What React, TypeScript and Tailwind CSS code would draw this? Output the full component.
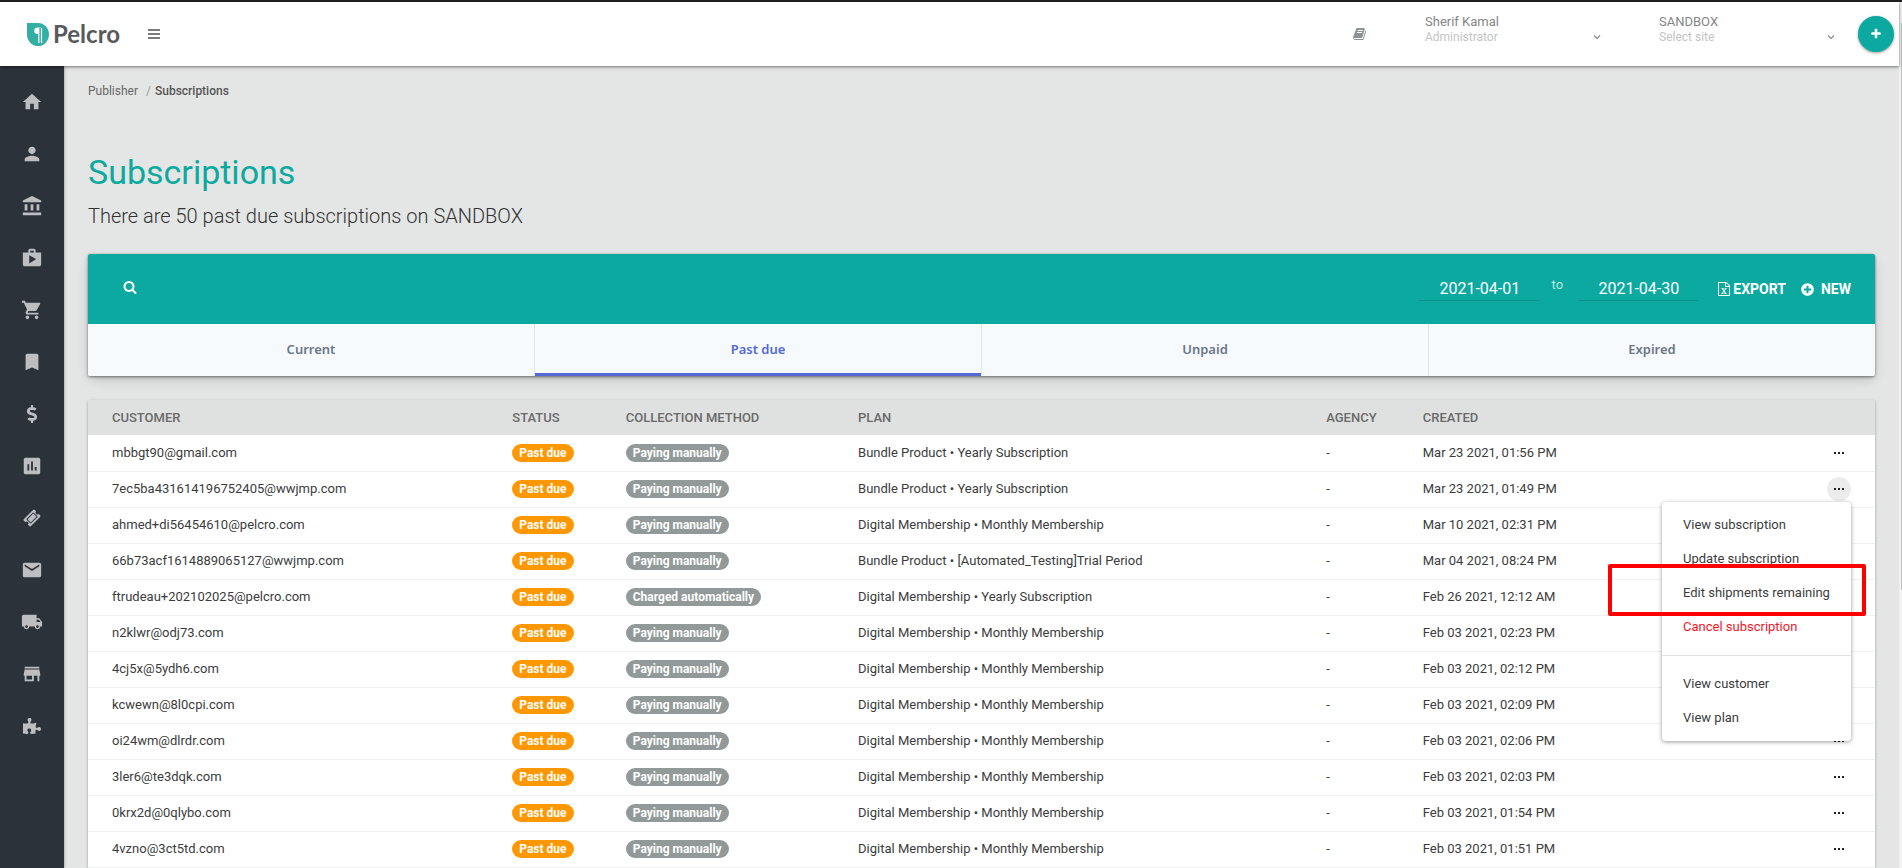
import { FaDollarSign, FaPlusCircle, FaPuzzlePiece } from "react-icons/fa";
import {
    MdHome,
    MdPerson,
    MdAccountBalance,
    MdShop,
    MdShoppingCart,
    MdBookmark,
    MdAssessment,
    MdEmail,
    MdLocalShipping,
    MdStore,
} from "react-icons/md";

type IconProps = { className?: string };

const BookIcon = ({ className }: IconProps) => (
    <svg viewBox="0 0 1792 1792" fill="currentColor" className={className}>
        <path d="M1639 478q40 57 18 129l-275 906q-19 64-76.500 107.500t-122.500 43.500h-923q-77 0-148.500-53.500t-99.500-131.500q-24-67-2-127 0-4 3-27t4-37q1-8-3-21.500t-3-19.500q2-11 8-21t16.500-23.500 16.500-23.500q23-38 45-91.500t30-91.500q3-10 .5-30t-.5-28q3-11 17-28t17-23q21-36 42-92t25-90q1-9-2.500-32t.5-28q4-13 22-30.500t22-22.500q19-26 42.500-84.500t27.500-96.500q1-8-3-25.500t-2-26.500q2-8 9-18t18-23 17-21q8-12 16.500-30.500t15-35 16-36 19.500-32 26.500-23.500 36-11.500 47.500 5.500l-1 3q38-9 51-9h761q74 0 114 56t18 130l-274 906q-36 119-71.500 153.500t-128.500 34.500h-869q-27 0-38 15-11 16-1 43 24 70 144 70h923q29 0 56-15.500t35-41.500l300-987q7-22 5-57 38 15 59 43zm-1064 2q-4 13 2 22.500t20 9.500h608q13 0 25.500-9.500t16.500-22.500l21-64q4-13-2-22.500t-20-9.500h-608q-13 0-25.500 9.500t-16.500 22.500zm-83 256q-4 13 2 22.500t20 9.500h608q13 0 25.500-9.500t16.500-22.500l21-64q4-13-2-22.500t-20-9.500h-608q-13 0-25.500 9.500t-16.500 22.500z" />
    </svg>
);

const SearchIcon = ({ className }: IconProps) => (
    <svg viewBox="0 0 1792 1792" fill="currentColor" className={className}>
        <path d="M1216 832q0-185-131.500-316.500t-316.500-131.500-316.500 131.500-131.500 316.500 131.500 316.500 316.500 131.500 316.500-131.500 131.500-316.500zm512 832q0 52-38 90t-90 38q-54 0-90-38l-343-342q-179 124-399 124-143 0-273.500-55.500t-225-150-150-225-55.500-273.500 55.500-273.500 150-225 225-150 273.500-55.500 273.500 55.500 225 150 150 225 55.500 273.500q0 220-124 399l343 343q37 37 37 90z" />
    </svg>
);

const PlusIcon = ({ className }: IconProps) => (
    <svg viewBox="0 0 1792 1792" fill="currentColor" className={className}>
        <path d="M1600 736v192q0 40-28 68t-68 28h-416v416q0 40-28 68t-68 28h-192q-40 0-68-28t-28-68v-416h-416q-40 0-68-28t-28-68v-192q0-40 28-68t68-28h416v-416q0-40 28-68t68-28h192q40 0 68 28t28 68v416h416q40 0 68 28t28 68z" />
    </svg>
);

const ExcelIcon = ({ className }: IconProps) => (
    <svg viewBox="0 0 1792 1792" fill="currentColor" className={className}>
        <path d="M1596 380q28 28 48 76t20 88v1152q0 40-28 68t-68 28h-1344q-40 0-68-28t-28-68v-1600q0-40 28-68t68-28h896q40 0 88 20t76 48zm-444-244v376h376q-10-29-22-41l-313-313q-12-12-41-22zm384 1528v-1024h-416q-40 0-68-28t-28-68v-416h-768v1536h1280zm-979-234v106h281v-106h-75l103-161q5-7 10-16.500t7.500-13.500 3.500-4h2q1 4 5 10 2 4 4.500 7.500t6 8 6.500 8.500l107 161h-76v106h291v-106h-68l-192-273 195-282h67v-107h-279v107h74l-103 159q-4 7-10 16.500t-9 13.500l-2 3h-2q-1-4-5-10-6-11-17-23l-106-159h76v-107h-290v107h68l189 272-194 283h-68z" />
    </svg>
);

const TicketIcon = ({ className }: IconProps) => (
    <svg viewBox="0 0 1792 1792" fill="currentColor" className={className}>
        <path d="M1024 452l316 316-572 572-316-316zm-211 979l618-618q19-19 19-45t-19-45l-362-362q-18-18-45-18t-45 18l-618 618q-19 19-19 45t19 45l362 362q18 18 45 18t45-18zm889-637l-907 908q-37 37-90.500 37t-90.500-37l-126-126q56-56 56-136t-56-136-136-56-136 56l-125-126q-37-37-37-90.500t37-90.500l907-906q37-37 90.500-37t90.500 37l125 125q-56 56-56 136t56 136 136 56 136-56l126 125q37 37 37 90.500t-37 90.500z" />
    </svg>
);

const ChevronIcon = ({ className }: IconProps) => (
    <svg viewBox="0 0 8 8" fill="none" stroke="currentColor" strokeWidth="1.2" className={className}>
        <path d="M1 2.500l3 3 3-3" />
    </svg>
);

const LogoMark = ({ className }: IconProps) => (
    <svg viewBox="0 0 22 23" className={className}>
        <path d="M0 0h11a11 11.500 0 1 1-11 11.500z" fill="#33aea3" />
        <path d="M14.500 5v15M11.800 5v15" stroke="#fff" strokeWidth="1.200" />
        <path d="M15.500 4.500h-5a3 3 0 0 0 0 6.500h1.300v-6z" fill="#fff" />
    </svg>
);

const navItems = [
    { label: "Home", icon: MdHome, size: "size-[22px]" },
    { label: "Customers", icon: MdPerson, size: "size-[22px]" },
    { label: "Accounts", icon: MdAccountBalance, size: "size-[22px]" },
    { label: "Products", icon: MdShop, size: "size-[22px]" },
    { label: "Orders", icon: MdShoppingCart, size: "size-[22px]" },
    { label: "Bookmarks", icon: MdBookmark, size: "size-[22px]" },
    { label: "Payments", icon: FaDollarSign, size: "size-[18px]" },
    { label: "Reports", icon: MdAssessment, size: "size-[22px]" },
    { label: "Coupons", icon: TicketIcon, size: "size-[18px]" },
    { label: "Email", icon: MdEmail, size: "size-[22px]" },
    { label: "Shipping", icon: MdLocalShipping, size: "size-[22px]" },
    { label: "Store", icon: MdStore, size: "size-[22px]" },
    { label: "Integrations", icon: FaPuzzlePiece, size: "size-[18px]" },
];

const tabs = ["Current", "Past due", "Unpaid", "Expired"];

const MANUAL = "Paying manually";
const AUTO = "Charged automatically";

const subscriptions = [
    { customer: "mbbgt90@gmail.com", method: MANUAL, plan: "Bundle Product • Yearly Subscription", created: "Mar 23 2021, 01:56 PM" },
    { customer: "7ec5ba431614196752405@wwjmp.com", method: MANUAL, plan: "Bundle Product • Yearly Subscription", created: "Mar 23 2021, 01:49 PM" },
    { customer: "ahmed+di56454610@pelcro.com", method: MANUAL, plan: "Digital Membership • Monthly Membership", created: "Mar 10 2021, 02:31 PM" },
    { customer: "66b73acf1614889065127@wwjmp.com", method: MANUAL, plan: "Bundle Product • [Automated_Testing]Trial Period", created: "Mar 04 2021, 08:24 PM" },
    { customer: "ftrudeau+202102025@pelcro.com", method: AUTO, plan: "Digital Membership • Yearly Subscription", created: "Feb 26 2021, 12:12 AM" },
    { customer: "n2klwr@odj73.com", method: MANUAL, plan: "Digital Membership • Monthly Membership", created: "Feb 03 2021, 02:23 PM" },
    { customer: "4cj5x@5ydh6.com", method: MANUAL, plan: "Digital Membership • Monthly Membership", created: "Feb 03 2021, 02:12 PM" },
    { customer: "kcwewn@8l0cpi.com", method: MANUAL, plan: "Digital Membership • Monthly Membership", created: "Feb 03 2021, 02:09 PM" },
    { customer: "oi24wm@dlrdr.com", method: MANUAL, plan: "Digital Membership • Monthly Membership", created: "Feb 03 2021, 02:06 PM" },
    { customer: "3ler6@te3dqk.com", method: MANUAL, plan: "Digital Membership • Monthly Membership", created: "Feb 03 2021, 02:03 PM" },
    { customer: "0krx2d@0qlybo.com", method: MANUAL, plan: "Digital Membership • Monthly Membership", created: "Feb 03 2021, 01:54 PM" },
    { customer: "4vzno@3ct5td.com", method: MANUAL, plan: "Digital Membership • Monthly Membership", created: "Feb 03 2021, 01:51 PM" },
];

const OPEN_ROW = 1;

function HeaderPicker({ title, subtitle }: { title: string; subtitle: string }) {
    return (
        <button className="flex w-[234px] items-start justify-between pr-[58px] text-left leading-[14px]">
            <span className="flex flex-col">
                <span className="text-[13px] text-[#858585]">{title}</span>
                <span className="text-xs text-[#c4c4c4]">{subtitle}</span>
            </span>
            <ChevronIcon className="mt-[18px] size-2 text-[#888]" />
        </button>
    );
}

function Header() {
    return (
        <header className="relative z-10 flex h-16 items-center bg-white shadow-[0_1px_3px_rgba(0,0,0,0.5)]">
            <a href="#" className="ml-[27px] flex items-center gap-1">
                <LogoMark className="h-[23px] w-[22px]" />
                <span className="font-['Lato',sans-serif] text-2xl leading-6 font-bold text-[#58595b]">Pelcro</span>
            </a>
            <button aria-label="Toggle menu" className="ml-7 flex w-3 flex-col gap-0.5">
                <span className="h-0.5 bg-[#7a7a7a]" />
                <span className="h-0.5 bg-[#7a7a7a]" />
                <span className="h-0.5 bg-[#7a7a7a]" />
            </button>
            <div className="ml-auto flex items-center pr-[5px]">
                <button aria-label="Documentation" className="mr-[58px]">
                    <BookIcon className="size-[14px] text-[#8b9392]" />
                </button>
                <div className="mb-2 flex">
                    <HeaderPicker title="Sherif Kamal" subtitle="Administrator" />
                    <HeaderPicker title="SANDBOX" subtitle="Select site" />
                </div>
                <button
                    aria-label="Create"
                    className="-ml-[35px] flex size-9 items-center justify-center rounded-full bg-[#0ca9a0] text-white shadow-[0_1px_3px_rgba(0,0,0,0.4)]"
                >
                    <PlusIcon className="size-3" />
                </button>
            </div>
        </header>
    );
}

function Sidebar() {
    return (
        <nav className="w-16 shrink-0 bg-[#2b323a] pt-[10px] shadow-[0_0_3px_rgba(0,0,0,0.4)]">
            {navItems.map(({ label, icon: Icon, size }) => (
                <a key={label} href="#" aria-label={label} className="flex h-[52px] items-center justify-center text-[#bcbec1]">
                    <Icon className={size} />
                </a>
            ))}
        </nav>
    );
}

function MenuItem({ children, danger }: { children: string; danger?: boolean }) {
    return (
        <button
            role="menuitem"
            className={
                danger
                    ? "block h-[34px] w-full px-[21px] text-left text-[#f4141f]"
                    : "block h-[34px] w-full px-[21px] text-left text-[#3c3c3c]"
            }
        >
            {children}
        </button>
    );
}

function RowMenu() {
    return (
        <div
            role="menu"
            className="absolute top-[25px] right-0 z-20 w-[189px] rounded-sm bg-white py-[6px] text-[13px] whitespace-nowrap shadow-[0_1px_4px_rgba(0,0,0,0.4)]"
        >
            <MenuItem>View subscription</MenuItem>
            <MenuItem>Update subscription</MenuItem>
            <MenuItem>Edit shipments remaining</MenuItem>
            <MenuItem danger>Cancel subscription</MenuItem>
            <hr className="my-[11px] border-[#e0e0e0]" />
            <MenuItem>View customer</MenuItem>
            <MenuItem>View plan</MenuItem>
            <div className="pointer-events-none absolute top-[62px] -right-[15px] h-[52px] w-[258px] rounded-xs border-4 border-[#fe0000]" />
        </div>
    );
}

function Toolbar() {
    return (
        <section className="mt-6 overflow-hidden rounded-xs shadow-[0_5px_12px_-2px_rgba(0,0,0,0.18),0_1px_3px_rgba(0,0,0,0.5)]">
            <div className="flex h-[70px] items-center bg-[#0ca9a0] px-6 text-white">
                <button aria-label="Search" className="mb-1 ml-[11px]">
                    <SearchIcon className="size-[14px]" />
                </button>
                <div className="ml-auto flex items-center">
                    <input
                        aria-label="From date"
                        defaultValue="2021-04-01"
                        className="h-6 w-[121px] border-b border-[#0a948c] text-center text-base leading-5"
                    />
                    <span className="mb-2 w-[38px] pr-1 text-center text-[13px] text-[#b9e6e3]">to</span>
                    <input
                        aria-label="To date"
                        defaultValue="2021-04-30"
                        className="h-6 w-[121px] border-b border-[#0a948c] text-center text-base leading-5"
                    />
                    <button className="ml-[18px] flex items-center gap-0.5 text-sm font-bold">
                        <ExcelIcon className="size-[14px]" />
                        EXPORT
                    </button>
                    <button className="ml-[15px] flex items-center gap-[7px] text-sm font-bold">
                        <FaPlusCircle className="size-[13px]" />
                        NEW
                    </button>
                </div>
            </div>
            <div className="flex h-[52px] divide-x divide-[#e1e6ea] bg-[#f6fafd] font-['Noto_Sans',sans-serif] text-[13px] font-semibold">
                {tabs.map((tab) => (
                    <button
                        key={tab}
                        className={
                            tab === "Past due"
                                ? "flex-1 text-[#5468d4] shadow-[inset_0_-3px_0_#5469d4]"
                                : "flex-1 text-[#6c7688]"
                        }
                    >
                        {tab}
                    </button>
                ))}
            </div>
        </section>
    );
}

function SubscriptionTable() {
    return (
        <section className="mt-6 rounded-xs bg-white shadow-[0_1px_3px_rgba(0,0,0,0.35)]">
            <table className="w-full table-fixed text-left text-[13px] text-[#3c3c3c]">
                <colgroup>
                    <col className="w-[22.4%]" />
                    <col className="w-[6.35%]" />
                    <col className="w-[13%]" />
                    <col className="w-[26.2%]" />
                    <col className="w-[5.4%]" />
                    <col />
                    <col className="w-[5%]" />
                </colgroup>
                <thead>
                    <tr className="h-[35px] bg-[#dfe1e0] text-[#6a6a6a]">
                        <th className="pl-6 font-medium">CUSTOMER</th>
                        <th className="pl-6 font-medium">STATUS</th>
                        <th className="pl-6 font-medium">COLLECTION METHOD</th>
                        <th className="pl-6 font-medium">PLAN</th>
                        <th className="pl-6 font-medium">AGENCY</th>
                        <th className="pl-6 font-medium">CREATED</th>
                        <th aria-label="Actions" />
                    </tr>
                </thead>
                <tbody>
                    {subscriptions.map((sub, index) => (
                        <tr key={sub.customer} className="h-9 border-b border-[#f0f1f1] whitespace-nowrap">
                            <td className="pl-6">{sub.customer}</td>
                            <td className="pl-6">
                                <span className="inline-block rounded-full bg-[#ff9800] px-[7px] text-xs leading-[18px] font-bold text-white">
                                    Past due
                                </span>
                            </td>
                            <td className="pl-6">
                                <span className="inline-block rounded-full bg-[#929a99] px-[7px] text-xs leading-[18px] font-bold text-white">
                                    {sub.method}
                                </span>
                            </td>
                            <td className="pl-6">{sub.plan}</td>
                            <td className="pl-6">-</td>
                            <td className="pl-6">{sub.created}</td>
                            <td className="pr-6">
                                <div className="relative ml-auto size-6">
                                    <button
                                        aria-label="Row actions"
                                        className={
                                            index === OPEN_ROW
                                                ? "flex size-6 items-center justify-center gap-0.5 rounded-full bg-[#ececec]"
                                                : "flex size-6 items-center justify-center gap-0.5 rounded-full"
                                        }
                                    >
                                        <span className="size-0.5 bg-[#222]" />
                                        <span className="size-0.5 bg-[#222]" />
                                        <span className="size-0.5 bg-[#222]" />
                                    </button>
                                    {index === OPEN_ROW && <RowMenu />}
                                </div>
                            </td>
                        </tr>
                    ))}
                </tbody>
            </table>
        </section>
    );
}

export default function App() {
    return (
        <div className="flex min-h-screen border-t-2 border-[#231f20] bg-[#e4e6e5] font-['Roboto',sans-serif]">
            <div className="flex min-w-0 flex-1 flex-col">
                <Header />
                <div className="flex flex-1">
                    <Sidebar />
                    <main className="min-w-0 flex-1 px-6 pt-4">
                        <nav aria-label="Breadcrumb" className="flex text-xs leading-[18px] text-[#666]">
                            <a href="#">Publisher</a>
                            <span className="pr-1 pl-2 text-[#999]">/</span>
                            <span className="font-medium text-[#555]">Subscriptions</span>
                        </nav>
                        <h1 className="mt-[50px] text-[34px] leading-[44px] text-[#0ca9a0]">Subscriptions</h1>
                        <p className="mt-2 text-xl leading-7 font-light text-[#333]">
                            There are 50 past due subscriptions on SANDBOX
                        </p>
                        <Toolbar />
                        <SubscriptionTable />
                    </main>
                </div>
            </div>
            <div className="w-[3px] shrink-0 bg-[#f1f1f1] pt-[21px]">
                <div className="ml-0.5 h-[567px] bg-[#c1c1c1]" />
            </div>
        </div>
    );
}
